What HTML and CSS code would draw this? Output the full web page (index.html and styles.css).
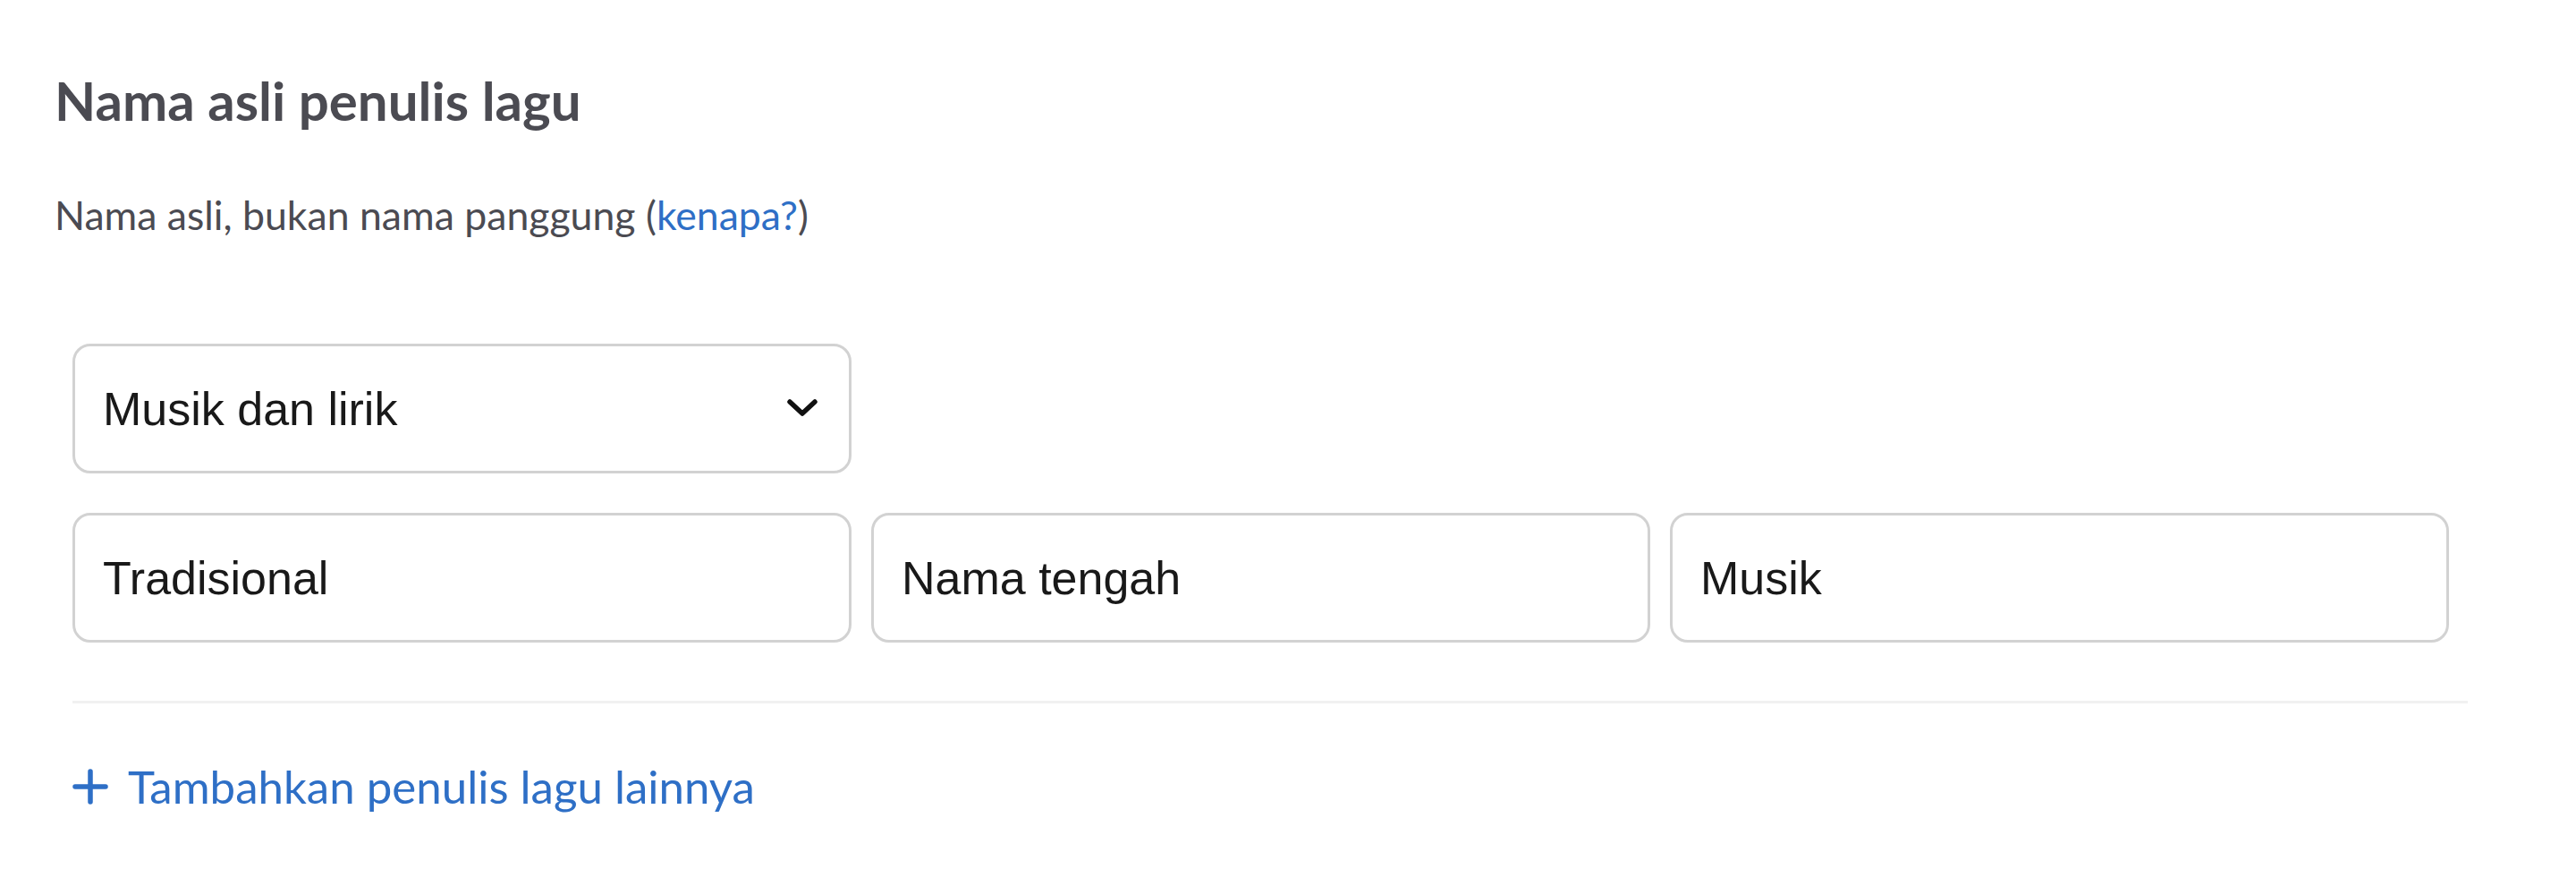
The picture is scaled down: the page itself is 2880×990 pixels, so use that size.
FILE: index.html
```html
<!DOCTYPE html>
<html lang="id">
<head>
<meta charset="utf-8">
<title>Nama asli penulis lagu</title>
<link rel="stylesheet" href="styles.css">
</head>
<body>
<section class="section">
  <h1 class="title">Nama asli penulis lagu</h1>
  <p class="subtitle">Nama asli, bukan nama panggung (<a class="link" href="#">kenapa?</a>)</p>
  <div class="form">
    <div class="grid">
      <div class="select-wrap">
        <select class="field select">
          <option>Musik dan lirik</option>
          <option>Musik</option>
          <option>Lirik</option>
        </select>
        <svg class="chevron" viewBox="0 0 34 20" aria-hidden="true"><path d="M3 3 L17 16 L31 3" fill="none" stroke="#111" stroke-width="5.5" stroke-linecap="round" stroke-linejoin="round"/></svg>
      </div>
      <div class="row">
        <input class="field" type="text" value="Tradisional">
        <input class="field" type="text" value="Nama tengah">
        <input class="field" type="text" value="Musik">
      </div>
    </div>
    <hr class="divider">
    <a class="add" href="#">
      <svg class="plus" viewBox="0 0 40 40" aria-hidden="true"><path d="M20 3 V37 M3 20 H37" fill="none" stroke="#2e6fc6" stroke-width="5.5" stroke-linecap="round"/></svg>
      <span>Tambahkan penulis lagu lainnya</span>
    </a>
  </div>
</section>
</body>
</html>
```

FILE: styles.css
```css
html, body {
  margin: 0;
  padding: 0;
  background: #ffffff;
}

.section {
  padding: 76px 0 0 61px;
  font-family: Lato, "Noto Sans", sans-serif;
}

.title {
  margin: 0;
  font-size: 60px;
  line-height: 72px;
  font-weight: 700;
  color: #4b4b52;
}

.subtitle {
  margin: 65px 0 0 0;
  font-size: 44.6px;
  line-height: 54px;
  font-weight: 400;
  color: #4b4b52;
}

.link {
  color: #2e6fc6;
  text-decoration: none;
}

.form {
  margin-top: 117px;
  padding-left: 20px;
  width: 2678px;
}

.grid {
  display: flex;
  flex-direction: column;
  gap: 44px;
}

.row {
  display: grid;
  grid-template-columns: repeat(3, 871px);
  column-gap: 22px;
}

.select-wrap {
  position: relative;
  width: 871px;
}

.field {
  box-sizing: border-box;
  display: block;
  width: 100%;
  height: 145px;
  margin: 0;
  padding: 0 31px;
  border: 3px solid #d2d2d2;
  border-radius: 20px;
  background: #ffffff;
  font-family: "Liberation Sans", Arial, sans-serif;
  font-size: 52px;
  color: #191919;
  outline: none;
}

.select {
  appearance: none;
  -webkit-appearance: none;
  padding-right: 90px;
}

.chevron {
  position: absolute;
  right: 38px;
  top: 62px;
  width: 34px;
  height: 20px;
  pointer-events: none;
}

.divider {
  margin: 65px 0 0 0;
  border: 0;
  height: 3px;
  background: #f1f1f1;
}

.add {
  display: flex;
  align-items: center;
  gap: 22px;
  margin-top: 62px;
  color: #2e6fc6;
  text-decoration: none;
  font-size: 51px;
  line-height: 62px;
}

.plus {
  width: 40px;
  height: 40px;
  flex: none;
}
```
